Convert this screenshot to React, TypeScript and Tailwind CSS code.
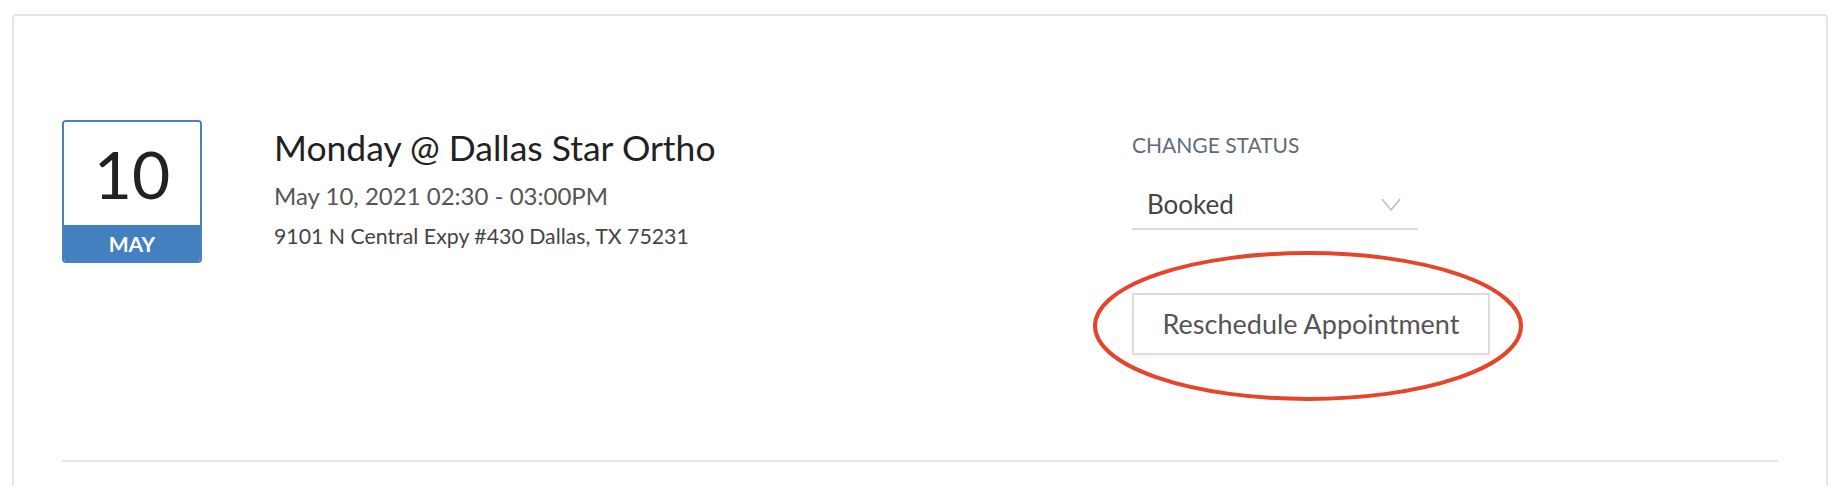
import React from 'react';

export default function App() {
  return (
    <div className="min-h-screen bg-white px-[12px] pt-[14px] font-['Lato',sans-serif]">
      <div className="h-[600px] rounded-[4px] border-2 border-[#e6e6e6] px-[48px] pt-[104px]">
        <div className="flex items-start">
          {/* Date + details */}
          <div className="flex w-[1070px] items-start">
            <div className="flex h-[143px] w-[140px] flex-col overflow-hidden rounded-[4px] border-2 border-[#4a80bf]">
              <div className="flex flex-1 items-center justify-center bg-white text-[66px] leading-none text-[#222]">
                10
              </div>
              <div className="flex h-[36px] items-center justify-center bg-[#4480c0] text-[21px] font-bold leading-none text-white">
                MAY
              </div>
            </div>
            <div className="ml-[72px] mt-[7px]">
              <h2 className="text-[35.5px] leading-[42px] text-[#222]">Monday @ Dallas Star Ortho</h2>
              <p className="mt-[12px] text-[24px] leading-[30px] text-[#555]">May 10, 2021 02:30 - 03:00PM</p>
              <p className="mt-[13px] text-[21.3px] leading-[24px] text-[#444]">9101 N Central Expy #430 Dallas, TX 75231</p>
            </div>
          </div>

          {/* Status + action */}
          <div className="w-[358px] pt-[13px]">
            <div className="text-[21px] uppercase leading-[24px] text-[#5f6b78]">Change Status</div>
            <div className="mt-[31px] flex w-[286px] items-center justify-between border-b-2 border-[#dadada] pb-[8px] pl-[15px] pr-[17px]">
              <span className="text-[26px] leading-[32px] text-[#444]">Booked</span>
              <svg width="20" height="13" viewBox="0 0 20 13" fill="none">
                <path d="M1 1l9 11 9-11" stroke="#bdbdbd" strokeWidth="1.5" />
              </svg>
            </div>
            <div className="relative mt-[63px]">
              <button className="h-[62px] w-[358px] border-2 border-[#dcdcdc] bg-white text-[27px] text-[#555] shadow-[0_2px_2px_rgba(0,0,0,0.04)]">
                Reschedule Appointment
              </button>
              <svg
                className="pointer-events-none absolute left-[-40px] top-[-43px]"
                width="432"
                height="152"
                viewBox="0 0 432 152"
                fill="none"
              >
                <ellipse cx="216" cy="76" rx="213" ry="73" stroke="#e5452b" strokeWidth="4" />
              </svg>
            </div>
          </div>
        </div>
        <div className="mt-[105px] h-[2px] bg-[#e5e5e5]" />
      </div>
    </div>
  );
}
